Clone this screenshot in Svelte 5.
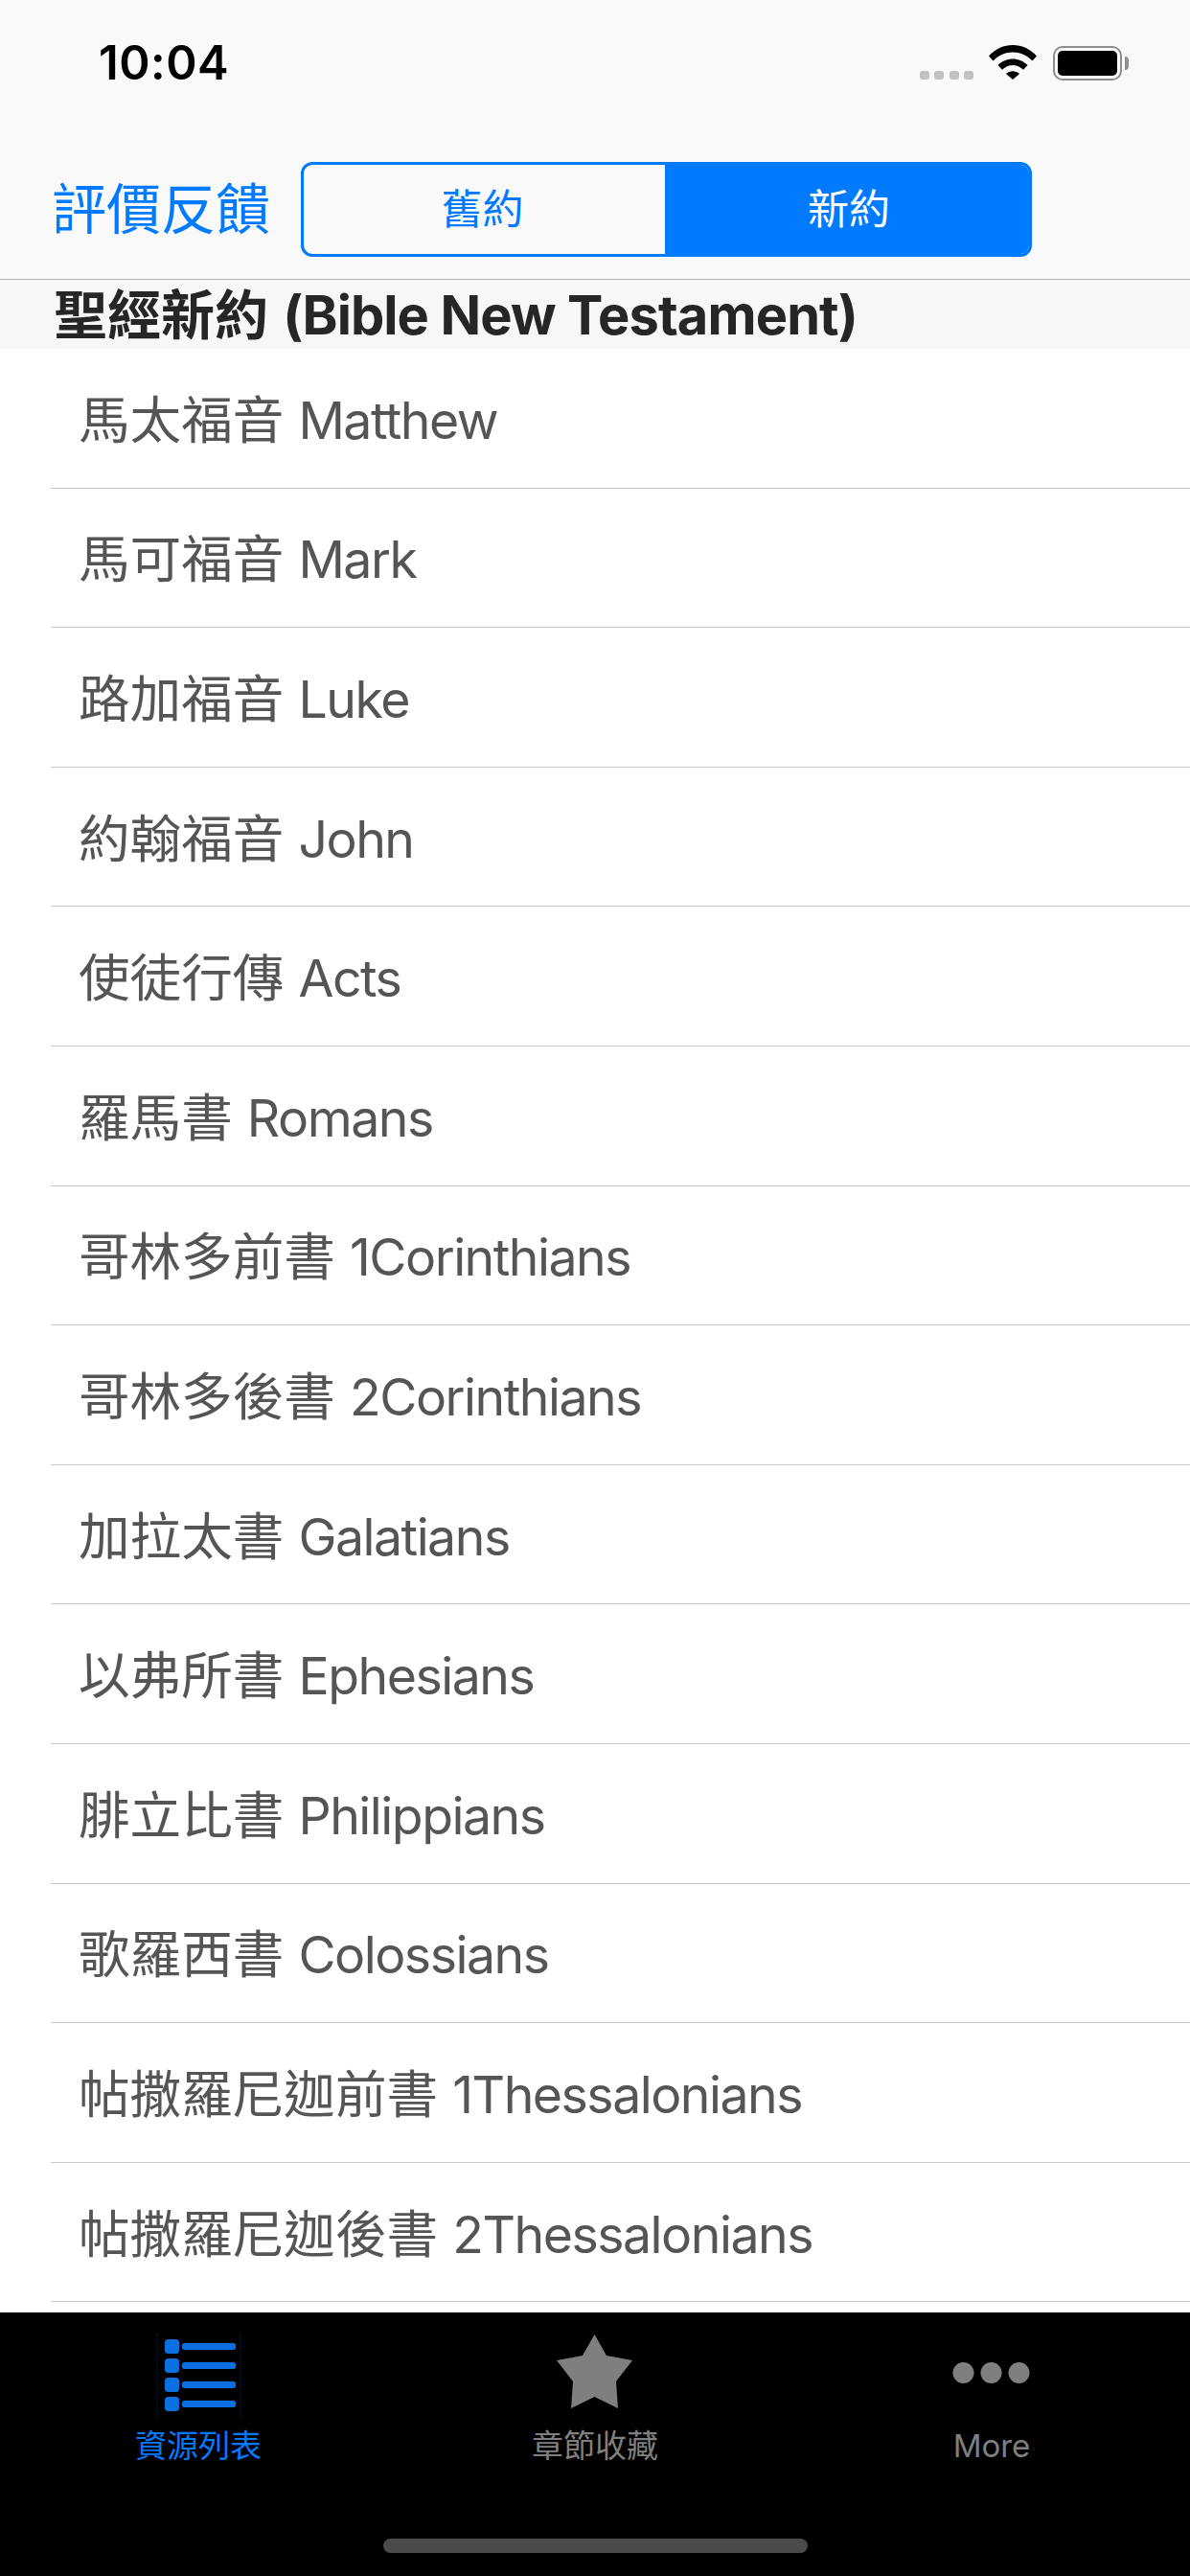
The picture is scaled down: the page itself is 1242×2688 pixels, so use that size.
<script lang="ts">
	const books = [
		["馬太福音", "Matthew"],
		["馬可福音", "Mark"],
		["路加福音", "Luke"],
		["約翰福音", "John"],
		["使徒行傳", "Acts"],
		["羅馬書", "Romans"],
		["哥林多前書", "1Corinthians"],
		["哥林多後書", "2Corinthians"],
		["加拉太書", "Galatians"],
		["以弗所書", "Ephesians"],
		["腓立比書", "Philippians"],
		["歌羅西書", "Colossians"],
		["帖撒羅尼迦前書", "1Thessalonians"],
		["帖撒羅尼迦後書", "2Thessalonians"],
	];
	const listBars = [0, 1, 2, 3];
</script>

<div class="screen">
	<header class="top">
		<div class="status">
			<span class="time">10:04</span>
			<div class="status-icons">
				<div class="signal"><i></i><i></i><i></i><i></i></div>
				<svg class="wifi" width="50" height="36" viewBox="0 0 50 36">
					<path d="M0 11.500C14 -3.800 36 -3.800 50 11.500L45.500 16.500C34 4.500 16 4.500 4.500 16.500Z" />
					<path d="M9.500 21C18 12.200 32 12.200 40.500 21L36 25.800C29.500 19.500 20.500 19.500 14 25.800Z" />
					<path d="M18 30C22 26.200 28 26.200 32 30L25 36Z" />
				</svg>
				<div class="battery"><span class="level"></span></div>
				<span class="cap"></span>
			</div>
		</div>
		<nav class="bar">
			<span class="feedback">評價反饋</span>
			<div class="segments">
				<span class="segment">舊約</span>
				<span class="segment on">新約</span>
			</div>
		</nav>
	</header>

	<h2 class="section">聖經新約 <span class="latin">(Bible New Testament)</span></h2>

	<ul class="list">
		{#each books as [zh, en]}
			<li><span class="name">{zh} <span class="latin">{en}</span></span></li>
		{/each}
	</ul>

	<footer class="tabs">
		<div class="tab-row">
			<div class="tab active">
				<svg class="icon" width="90" height="90" viewBox="0 0 90 90">
					<path class="rule" d="M2 1V90M89 1V90" />
					{#each listBars as n}
						<rect x="10" y={8 + n * 20} width="15" height="15" rx="3.500" />
						<rect x="28" y={12 + n * 20} width="56" height="7" rx="2.500" />
					{/each}
				</svg>
				<span class="label">資源列表</span>
			</div>
			<div class="tab">
				<svg class="icon" width="90" height="90" viewBox="0 0 90 90">
					<path d="M44.500 3L57 25L84 30L67 52L69 80L44.500 68L20 80L22 52L5 30L32 25Z" />
				</svg>
				<span class="label">章節收藏</span>
			</div>
			<div class="tab">
				<svg class="icon" width="90" height="90" viewBox="0 0 90 90">
					<circle cx="15.500" cy="43" r="11" />
					<circle cx="44.500" cy="43" r="11" />
					<circle cx="73.500" cy="43" r="11" />
				</svg>
				<span class="label">More</span>
			</div>
		</div>
		<span class="home"></span>
	</footer>
</div>

<style>
	:global(body) {
		background: #fff;
	}

	.screen {
		display: flex;
		flex-direction: column;
		width: 1242px;
		height: 2688px;
		overflow: hidden;
		font-family: Inter, "Noto Sans CJK TC", sans-serif;
	}

	.top {
		height: 291px;
		flex: none;
		background: #f9f9f9;
		border-bottom: 1px solid #b2b2b2;
	}

	.status {
		display: flex;
		justify-content: space-between;
		height: 169px;
		padding: 37px 64px 0 103px;
		box-sizing: border-box;
	}

	.time {
		font-size: 49px;
		line-height: 58px;
		font-weight: 600;
		letter-spacing: 0.5px;
		color: #000;
	}

	.status-icons {
		display: flex;
		align-items: flex-start;
		padding-top: 10px;
	}

	.signal {
		display: flex;
		gap: 5.300px;
		margin: 27px 16px 0 0;
	}

	.signal i {
		width: 10px;
		height: 9px;
		border-radius: 3px;
		background: #c2c2c2;
	}

	.wifi {
		fill: #000;
		margin-right: 17px;
	}

	.battery {
		box-sizing: border-box;
		width: 72px;
		height: 36px;
		padding: 3px;
		border: 2px solid #8e8e8e;
		border-radius: 10px;
		margin-top: 1px;
	}

	.level {
		display: block;
		height: 100%;
		border-radius: 5px;
		background: #000;
	}

	.cap {
		width: 4px;
		height: 14px;
		margin: 12px 0 0 3px;
		border-radius: 0 4px 4px 0;
		background: #8e8e8e;
	}

	.bar {
		display: flex;
		align-items: flex-start;
		padding-left: 54px;
	}

	.feedback {
		width: 260px;
		flex: none;
		font-size: 57px;
		line-height: 99px;
		color: #007aff;
	}

	.segments {
		display: flex;
		width: 763px;
		height: 99px;
		box-sizing: border-box;
		border: 3px solid #007aff;
		border-radius: 12px;
		overflow: hidden;
	}

	.segment {
		width: 373px;
		padding-right: 4px;
		flex: none;
		text-align: center;
		font-size: 43px;
		line-height: 93px;
		color: #007aff;
	}

	.segment.on {
		width: auto;
		flex: 1;
		padding: 0 0 0 4px;
		background: #007aff;
		color: #fff;
	}

	.section {
		flex: none;
		height: 72px;
		margin: 0;
		padding-left: 56px;
		background: #f7f7f7;
		font-size: 56px;
		line-height: 75px;
		font-weight: 700;
		color: #262626;
	}

	.section .latin {
		margin-left: 2px;
		letter-spacing: -0.9px;
	}

	.list {
		flex: 1;
		min-height: 0;
		margin: 0;
		padding: 0 0 0 53px;
		list-style: none;
		overflow: hidden;
	}

	.list li {
		height: 140.600px;
		display: flex;
		align-items: center;
		padding: 0 0 4px 29px;
		border-bottom: 1px solid #c8c7cc;
	}

	.name {
		font-size: 53.600px;
		color: #555;
	}

	.name .latin {
		letter-spacing: -1.5px;
	}

	.tabs {
		flex: none;
		height: 275px;
		display: flex;
		flex-direction: column;
		align-items: center;
		background: #000;
	}

	.tab-row {
		display: flex;
		width: 100%;
		height: 236px;
	}

	.tab {
		flex: 1;
		display: flex;
		flex-direction: column;
		align-items: center;
		padding-top: 20px;
		fill: #7f7f7f;
		color: #7f7f7f;
	}

	.tab.active {
		fill: #0a6fe0;
		color: #007aff;
	}

	.rule {
		fill: none;
		stroke: #04142a;
		stroke-width: 1;
	}

	.label {
		margin-top: 7px;
		font-size: 33px;
		line-height: 44px;
	}

	.home {
		width: 443px;
		height: 15px;
		border-radius: 8px;
		background: #4b4b4b;
	}
</style>
